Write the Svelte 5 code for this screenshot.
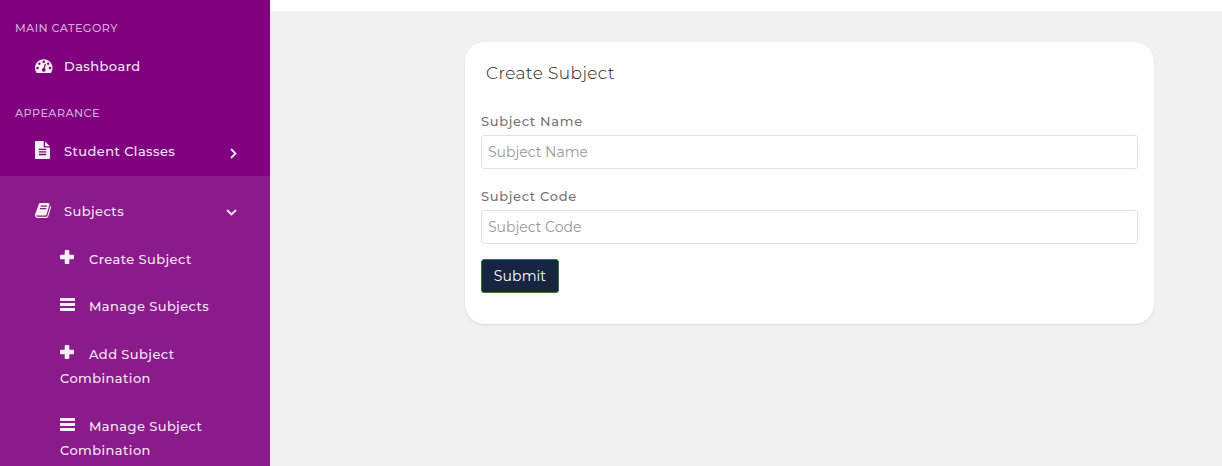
<script>
  const icons = {
    dashboard: { box: '0 128 1792 1536', w: 17.5, h: 15, d: 'M384 1152q0-53-37.5-90.5t-90.5-37.5-90.5 37.5-37.5 90.5 37.5 90.5 90.5 37.5 90.5-37.5 37.5-90.5zm192-448q0-53-37.5-90.5t-90.5-37.5-90.5 37.5-37.5 90.5 37.5 90.5 90.5 37.5 90.5-37.5 37.5-90.5zm428 481l101-382q6-26-7.5-48.5t-38.5-29.5-48 6.5-30 39.5l-101 382q-60 5-107 43.5t-63 98.5q-20 77 20 146t117 89 146-20 89-117q16-60-6-117t-72-91zm660-33q0-53-37.5-90.5t-90.5-37.5-90.5 37.5-37.5 90.5 37.5 90.5 90.5 37.5 90.5-37.5 37.5-90.5zm-640-640q0-53-37.5-90.5t-90.5-37.5-90.5 37.5-37.5 90.5 37.5 90.5 90.5 37.5 90.5-37.5 37.5-90.5zm448 192q0-53-37.5-90.5t-90.5-37.5-90.5 37.5-37.5 90.5 37.5 90.5 90.5 37.5 90.5-37.5 37.5-90.5zm320 448q0 261-141 483-19 29-54 29h-1402q-35 0-54-29-141-221-141-483 0-182 71-348t191-286 286-191 348-71 348 71 286 191 191 286 71 348z' },
    file: { box: '128 0 1536 1792', w: 15, h: 18, d: 'M1596 476q14 14 28 36h-472v-472q22 14 36 28zm-476 164h544v1056q0 40-28 68t-68 28h-1344q-40 0-68-28t-28-68v-1600q0-40 28-68t68-28h800v544q0 40 28 68t68 28zm160 736v-64q0-14-9-23t-23-9h-704q-14 0-23 9t-9 23v64q0 14 9 23t23 9h704q14 0 23-9t9-23zm0-256v-64q0-14-9-23t-23-9h-704q-14 0-23 9t-9 23v64q0 14 9 23t23 9h704q14 0 23-9t9-23zm0-256v-64q0-14-9-23t-23-9h-704q-14 0-23 9t-9 23v64q0 14 9 23t23 9h704q14 0 23-9t9-23z' },
    book: { box: '64 128 1664 1536', w: 16, h: 15, d: 'M1703 478q40 57 18 129l-275 906q-19 64-76.5 107.5t-122.5 43.5h-923q-77 0-148.5-53.5t-99.5-131.5q-24-67-2-127 0-4 3-27t4-37q1-8-3-21.5t-3-19.5q2-11 8-21t16.5-23.5 16.5-23.5q23-38 45-91.5t30-91.5q3-10 .5-30t-.5-28q3-11 17-28t17-23q21-36 42-92t25-90q1-9-2.5-32t.5-28q4-13 22-30.5t22-22.5q19-26 42.5-84.5t27.5-96.5q1-8-3-25.5t-2-26.5q2-8 9-18t18-23 17-21q8-12 16.5-30.5t15-35 16-36 19.5-32 26.5-23.5 36-11.5 47.5 5.5l-1 3q38-9 51-9h761q74 0 114 56t18 130l-274 906q-36 119-71.5 153.5t-128.5 34.5h-869q-27 0-38 15-11 16-1 43 24 70 144 70h923q29 0 56-15.5t35-41.5l300-987q7-22 5-57 38 15 59 43zm-1064 2q-4 13 2 22.5t20 9.5h608q13 0 25.5-9.5t16.5-22.5l21-64q4-13-2-22.5t-20-9.5h-608q-13 0-25.5 9.5t-16.5 22.5zm-83 256q-4 13 2 22.5t20 9.5h608q13 0 25.5-9.5t16.5-22.5l21-64q4-13-2-22.5t-20-9.5h-608q-13 0-25.5 9.5t-16.5 22.5z' },
    plus: { box: '0 0 14 14', w: 14, h: 14, d: 'M5.7 0h2.6q1 0 1 1v3.7H13q1 0 1 1v2.6q0 1-1 1H9.3V13q0 1-1 1H5.7q-1 0-1-1V9.3H1q-1 0-1-1V5.7q0-1 1-1h3.7V1q0-1 1-1z' },
    list: { box: '0 0 15 13', w: 15, h: 13, d: 'M0 .1h15v2.8H0zM0 5.1h15v2.8H0zM0 10.1h15v2.8H0z' },
  };
  const children = [
    { icon: 'plus', name: 'Create Subject' },
    { icon: 'list', name: 'Manage Subjects' },
    { icon: 'plus', name: 'Add Subject', rest: 'Combination' },
    { icon: 'list', name: 'Manage Subject', rest: 'Combination' },
  ];
  const fields = ['Subject Name', 'Subject Code'];
</script>

{#snippet glyph(name)}
  <svg class="glyph {name}" width={icons[name].w} height={icons[name].h} viewBox={icons[name].box} preserveAspectRatio="none" aria-hidden="true"><path d={icons[name].d} /></svg>
{/snippet}

<div class="page">
  <nav class="sidebar">
    <h6>MAIN CATEGORY</h6>
    <a class="item first" href="#dashboard"><span class="slot">{@render glyph('dashboard')}</span><span>Dashboard</span></a>
    <h6 class="second">APPEARANCE</h6>
    <a class="item classes" href="#classes"><span class="slot">{@render glyph('file')}</span><span>Student Classes</span>
      <svg class="arrow right" width="7" height="11" viewBox="0 0 7 11"><path d="M1 1l4.5 4.5L1 10" /></svg></a>
    <div class="open">
      <a class="item subjects" href="#subjects"><span class="slot">{@render glyph('book')}</span><span>Subjects</span>
        <svg class="arrow down" width="11" height="7" viewBox="0 0 11 7"><path d="M1 1l4.5 4.5L10 1" /></svg></a>
      <div class="children">
        {#each children as child}
          <a href="#child" class="child"><span class="line"><span class="cslot">{@render glyph(child.icon)}</span><span>{child.name}</span></span>{#if child.rest}<span class="line rest">{child.rest}</span>{/if}</a>
        {/each}
      </div>
    </div>
  </nav>
  <div class="main">
    <header></header>
    <section class="card">
      <h1>Create Subject</h1>
      <form onsubmit={(e) => e.preventDefault()}>
        {#each fields as field}
          <label><span>{field}</span><input type="text" placeholder={field} /></label>
        {/each}
        <button>Submit</button>
      </form>
    </section>
  </div>
</div>

<style>
  :global(body) { margin: 0; overflow: hidden; }
  .page { display: flex; width: 1222px; height: 466px; overflow: hidden; font-family: Montserrat, Inter, sans-serif; }
  .page *, .page { box-sizing: border-box; }
  .sidebar { width: 270px; flex: none; background: #800080; overflow: hidden; }
  h6 { margin: 20px 0 0 15px; font-size: 11.2px; line-height: 16px; font-weight: 500; color: #d6acd6; letter-spacing: .42px; white-space: nowrap; }
  h6.second { margin-top: 29px; }
  a { color: #f3e6f3; text-decoration: none; font-size: 13px; font-weight: 500; letter-spacing: .42px; white-space: nowrap; }
  .item { display: flex; align-items: center; padding: 0 33px 0 35px; height: 20px; }
  .first { margin-top: 20px; height: 20px; }
  .first :global(svg) { margin-top: -2px; }
  .slot { width: 29px; height: 20px; flex: none; display: flex; align-items: center; }
  .glyph { display: block; fill: #f4f0f4; }
  .classes { margin-top: 20px; height: 20px; }
  .classes .slot { padding-bottom: 2px; }
  .arrow { fill: none; stroke: #f4eaf4; stroke-width: 1.8; margin-left: auto; }
  .right { margin-top: 4px; margin-right: .5px; }
  .down { margin-top: 3px; }
  .open { margin-top: 15px; background: #8b1a8b; height: 290px; padding-top: 25px; }
  .subjects .slot { padding-bottom: 2px; }
  .children { padding: 26px 0 0 60px; }
  .child { display: block; margin-bottom: 24px; }
  .child:first-child { margin-bottom: 23px; }
  .line { display: flex; height: 24px; align-items: center; }
  .cslot { width: 29px; height: 24px; padding-top: 3px; flex: none; }
  .cslot :global(.list) { margin-top: 1px; }
  .main { width: 952px; background: #f1f1f1; }
  header { height: 11px; background: #fff; }
  .card { width: 689px; height: 282px; margin: 31px 0 0 195px; padding: 19px 16px; border-radius: 20px; background: #fff; box-shadow: 0 1px 2px #0000001c; }
  h1 { margin: 0 0 0 5px; font-size: 17px; line-height: 24px; font-weight: 300; color: #222; letter-spacing: .4px; }
  form { padding-top: 26px; }
  label { display: block; height: 75px; font-size: 13px; line-height: 20px; color: #757575; font-weight: 500; letter-spacing: .67px; }
  label span { display: block; height: 24px; }
  input { display: block; width: 657px; height: 34px; border: 1px solid #e2e2e2; border-radius: 3px; padding: 0 6px; font: 400 14px Montserrat, Inter, sans-serif; outline: 0; background: #fff; letter-spacing: 0; }
  input::placeholder { color: #999; opacity: 1; }
  button { display: block; width: 78px; height: 34px; margin-top: -2px; padding: 0; border: 1px solid #2f7d32; border-radius: 3px; background: #172541; color: #fff; font: 400 14px Montserrat, Inter, sans-serif; letter-spacing: .1px; }
</style>
